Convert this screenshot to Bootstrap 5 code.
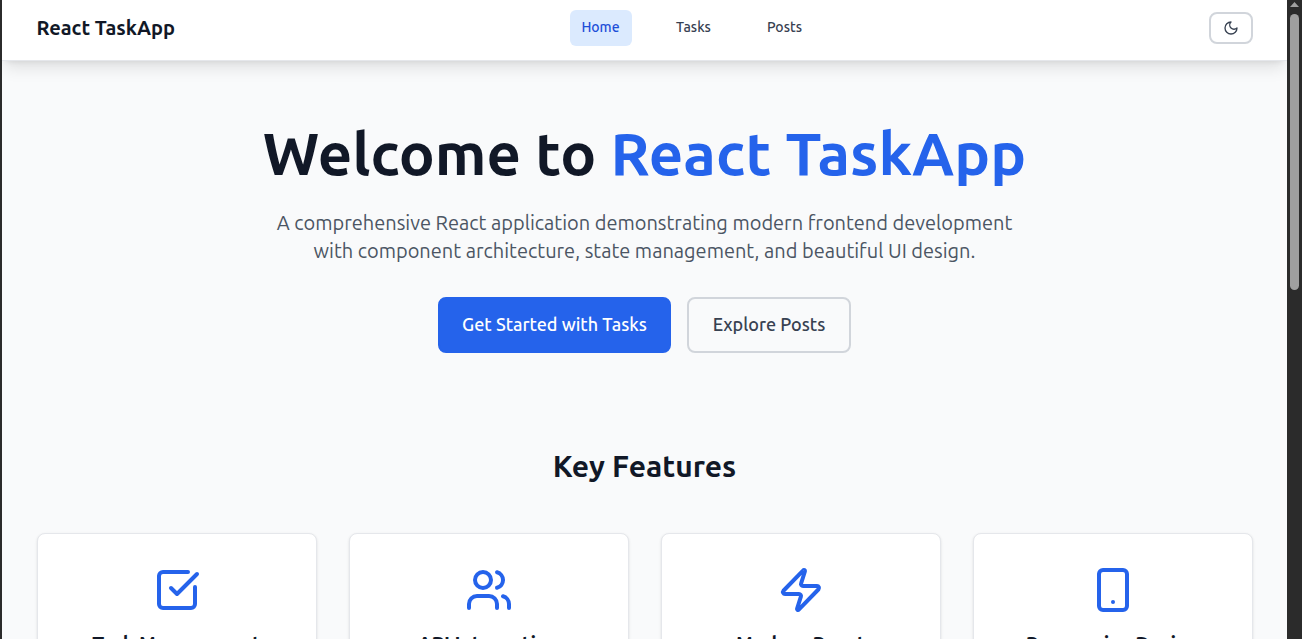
<!DOCTYPE html>
<html lang="en">
<head>
<meta charset="utf-8">
<meta name="viewport" content="width=device-width, initial-scale=1">
<title>React TaskApp</title>
<link href="https://cdn.jsdelivr.net/npm/bootstrap@5.3.0/dist/css/bootstrap.min.css" rel="stylesheet">
<style>
  body { font-family: Ubuntu, "Noto Sans", sans-serif; background: #2b2b2b; color: #111827; height: 639px; overflow: hidden; }
  .app-frame { height: 639px; padding-left: 2px; }
  .page-view { background: #f9fafb; min-width: 0; overflow: hidden; }
  .inner { width: 1216px; margin: 0 auto; }
  .top-nav { height: 61px; background: #fff; border-bottom: 1px solid #e5e7eb; box-shadow: 0 10px 15px -3px rgba(0,0,0,.1), 0 4px 6px -4px rgba(0,0,0,.1); position: relative; }
  .top-nav .inner { height: 56px; }
  .brand-name { width: 138px; font-size: 20px; line-height: 28px; font-weight: 600; white-space: nowrap; }
  .menu-links { gap: 32px; }
  .menu-link { height: 36px; width: 59px; border-radius: 6px; font-size: 14px; line-height: 20px; font-weight: 500; color: #374151; text-decoration: none; padding: 0 0 2px 1px; }
  .menu-link.active { width: 62px; background: #dbeafe; color: #1d4ed8; padding-left: 0; }
  .theme-btn { width: 44px; height: 32px; border: 2px solid #d1d5db; border-radius: 8px; color: #374151; background: #fff; }
  svg.line-icon { fill: none; stroke: currentColor; stroke-width: 2; stroke-linecap: round; stroke-linejoin: round; display: block; }
  .hero { padding-top: 62px; }
  .hero h1 { font-size: 60px; line-height: 60px; font-weight: 600; margin: 0 0 26px; white-space: nowrap; }
  .accent { color: #2563eb; }
  .intro { font-size: 20px; line-height: 28px; font-weight: 400; color: #4b5563; margin: 0 0 32px; white-space: nowrap; }
  .hero-btn { height: 56px; border-radius: 8px; border: 2px solid #d1d5db; font-size: 18px; line-height: 28px; font-weight: 500; color: #374151; padding: 0 0 2px; white-space: nowrap; }
  .hero-btn.start { width: 233px; background: #2563eb; border-color: #2563eb; color: #fff; }
  .hero-btn.explore { width: 164px; }
  .section-title { font-size: 30px; line-height: 36px; font-weight: 600; margin: 95px 0 49px; }
  .feature { width: 280px; height: 220px; padding-top: 32px; background: #fff; border: 1px solid #e5e7eb; border-radius: 8px; box-shadow: 0 1px 3px rgba(0,0,0,.1), 0 1px 2px -1px rgba(0,0,0,.1); }
  .feature svg { color: #2563eb; margin: 0 auto 16px; }
  .feature h3 { font-size: 20px; line-height: 28px; font-weight: 600; letter-spacing: -.13px; margin: 0; white-space: nowrap; }
  .scroll-rail { width: 15px; background: #2b2b2b; padding-top: 2px; }
  .scroll-arrow { width: 9px; height: 5px; background: #a0a0a0; clip-path: polygon(50% 0, 100% 100%, 0 100%); }
  .scroll-thumb { width: 9px; height: 276px; margin-top: 7px; border-radius: 5px; background: #9f9f9f; }
</style>
</head>
<body>
<div class="app-frame d-flex">
  <div class="page-view flex-grow-1">
    <nav class="top-nav">
      <div class="inner d-flex align-items-center justify-content-between">
        <span class="brand-name">React TaskApp</span>
        <div class="menu-links d-flex">
          <a class="menu-link active d-flex align-items-center justify-content-center" href="#">Home</a>
          <a class="menu-link d-flex align-items-center justify-content-center" href="#">Tasks</a>
          <a class="menu-link d-flex align-items-center justify-content-center" href="#">Posts</a>
        </div>
        <button class="theme-btn d-flex align-items-center justify-content-center p-0" type="button" aria-label="Theme">
          <svg class="line-icon" width="16" height="16" viewBox="0 0 24 24"><path d="M12 3a6 6 0 0 0 9 9 9 9 0 1 1-9-9Z"/></svg>
        </button>
      </div>
    </nav>
    <main class="inner">
      <section class="hero text-center">
        <h1>Welcome to <span class="accent">React TaskApp</span></h1>
        <p class="intro">A comprehensive React application demonstrating modern frontend development<br>with component architecture, state management, and beautiful UI design.</p>
        <div class="d-flex justify-content-center gap-3">
          <a class="btn hero-btn start d-flex align-items-center justify-content-center" href="#">Get Started with Tasks</a>
          <a class="btn hero-btn explore d-flex align-items-center justify-content-center" href="#">Explore Posts</a>
        </div>
      </section>
      <h2 class="section-title text-center">Key Features</h2>
      <section class="d-flex justify-content-between text-center">
        <div class="feature">
          <svg class="line-icon" width="48" height="48" viewBox="0 0 24 24"><path d="M21 10.5V19a2 2 0 0 1-2 2H5a2 2 0 0 1-2-2V5a2 2 0 0 1 2-2h12.5"/><path d="m9 11 3 3L22 4"/></svg>
          <h3>Task Management</h3>
        </div>
        <div class="feature">
          <svg class="line-icon" width="48" height="48" viewBox="0 0 24 24"><path d="M16 21v-2a4 4 0 0 0-4-4H6a4 4 0 0 0-4 4v2"/><circle cx="9" cy="7" r="4"/><path d="M22 21v-2a4 4 0 0 0-3-3.87"/><path d="M16 3.13a4 4 0 0 1 0 7.75"/></svg>
          <h3>API Integration</h3>
        </div>
        <div class="feature">
          <svg class="line-icon" width="48" height="48" viewBox="0 0 24 24"><path d="M4 14a1 1 0 0 1-.78-1.63l9.9-10.2a.5.5 0 0 1 .86.46l-1.92 6.02A1 1 0 0 0 13 10h7a1 1 0 0 1 .78 1.63l-9.9 10.2a.5.5 0 0 1-.86-.46l1.92-6.02A1 1 0 0 0 11 14z"/></svg>
          <h3>Modern React</h3>
        </div>
        <div class="feature">
          <svg class="line-icon" width="48" height="48" viewBox="0 0 24 24"><rect x="5" y="2" width="14" height="20" rx="2"/><path d="M12 18h.01"/></svg>
          <h3>Responsive Design</h3>
        </div>
      </section>
    </main>
  </div>
  <aside class="scroll-rail d-flex flex-column align-items-center">
    <div class="scroll-arrow"></div>
    <div class="scroll-thumb"></div>
  </aside>
</div>
<script src="https://cdn.jsdelivr.net/npm/bootstrap@5.3.0/dist/js/bootstrap.bundle.min.js"></script>
</body>
</html>
